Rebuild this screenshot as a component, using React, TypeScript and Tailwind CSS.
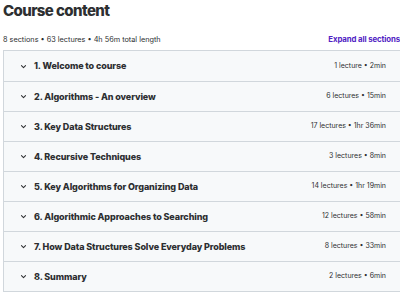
import React from "react";

const sections = [
  { title: "1. Welcome to course", meta: "1 lecture • 2min" },
  { title: "2. Algorithms - An overview", meta: "6 lectures • 15min" },
  { title: "3. Key Data Structures", meta: "17 lectures • 1hr 36min" },
  { title: "4. Recursive Techniques", meta: "3 lectures • 8min" },
  { title: "5. Key Algorithms for Organizing Data", meta: "14 lectures • 1hr 19min" },
  { title: "6. Algorithmic Approaches to Searching", meta: "12 lectures • 58min" },
  { title: "7. How Data Structures Solve Everyday Problems", meta: "8 lectures • 33min" },
  { title: "8. Summary", meta: "2 lectures • 6min" },
];

const Chevron = () => (
  <svg width="7" height="7" viewBox="0 0 24 24" fill="none" stroke="#2d2f31" strokeWidth="3.5" strokeLinecap="round" strokeLinejoin="round">
    <path d="M5 9l7 7 7-7" />
  </svg>
);

export default function App() {
  return (
    <div className="w-[400px] h-[292px] overflow-hidden bg-white pl-[3px] text-[#2d2f31]" style={{ fontFamily: "Inter, 'Liberation Sans', sans-serif" }}>
      <div className="w-[410px]">
        {/* Header */}
        <h2 className="text-[15px] font-extrabold leading-[20px] pt-[1px] tracking-[-0.6px]">Course content</h2>
        <div className="flex items-center justify-between mt-[12px] h-[14px] w-[397px]">
          <span className="text-[7.3px]">8 sections • 63 lectures • 4h 56m total length</span>
          <span className="text-[7.8px] font-bold text-[#5022c3] tracking-[-0.1px]">Expand all sections</span>
        </div>

        {/* Section list */}
        <div className="mt-[3px] border border-[#d1d7dc]">
          {sections.map((s, i) => (
            <div
              key={i}
              className={`flex items-center justify-between h-[30px] bg-[#f7f9fa] pl-[16px] pr-[26px] ${
                i > 0 ? "border-t border-[#d1d7dc]" : ""
              }`}
            >
              <div className="flex items-center gap-[7px]">
                <Chevron />
                <span className="text-[9px] font-extrabold tracking-[-0.1px]">{s.title}</span>
              </div>
              <span className="text-[7px] text-[#2d2f31]">{s.meta}</span>
            </div>
          ))}
        </div>
      </div>
    </div>
  );
}
